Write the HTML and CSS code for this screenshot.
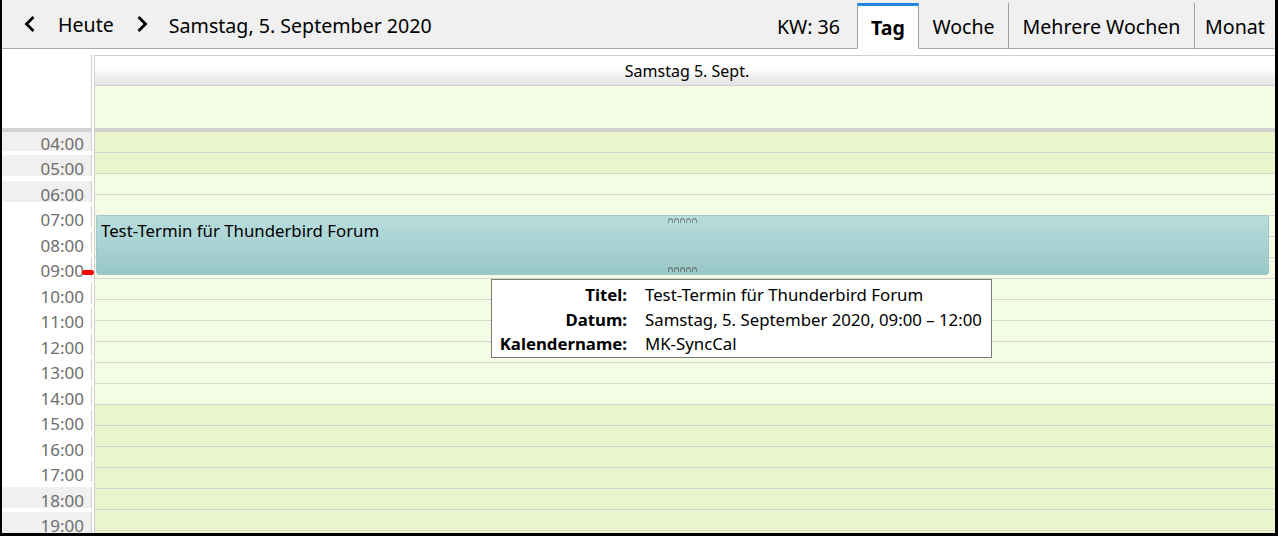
FILE: index.html
```html
<!DOCTYPE html>
<html lang="de">
<head>
<meta charset="utf-8">
<title>Kalender – Tag</title>
<link rel="stylesheet" href="styles.css">
</head>
<body>
<div class="window">
  <header class="toolbar">
    <div class="nav">
      <span class="chev prev"><svg width="14" height="18" viewBox="0 0 14 18"><path d="M10.5 2 L3.5 9 L10.5 16" fill="none" stroke="#000" stroke-width="2.8" stroke-linejoin="miter"/></svg></span>
      <span class="today">Heute</span>
      <span class="chev next"><svg width="14" height="18" viewBox="0 0 14 18"><path d="M3.5 2 L10.5 9 L3.5 16" fill="none" stroke="#000" stroke-width="2.8" stroke-linejoin="miter"/></svg></span>
      <span class="date">Samstag, 5. September 2020</span>
    </div>
    <div class="views">
      <span class="kw">KW: 36</span>
      <nav class="tabs">
        <div class="tab tab-day active">Tag</div>
        <div class="tab tab-week">Woche</div>
        <div class="tab tab-multi">Mehrere Wochen</div>
        <div class="tab tab-month">Monat</div>
      </nav>
    </div>
  </header>

  <main class="cal">
    <div class="timecol">
      <div class="corner"></div>
      <div class="sep"></div>
      <div class="labels">
        <div class="lab first off"><div class="box">04:00</div></div>
        <div class="lab off"><div class="box">05:00</div></div>
        <div class="lab off"><div class="box">06:00</div></div>
        <div class="lab"><div class="box">07:00</div></div>
        <div class="lab"><div class="box">08:00</div></div>
        <div class="lab"><div class="box">09:00</div></div>
        <div class="lab"><div class="box">10:00</div></div>
        <div class="lab"><div class="box">11:00</div></div>
        <div class="lab"><div class="box">12:00</div></div>
        <div class="lab"><div class="box">13:00</div></div>
        <div class="lab"><div class="box">14:00</div></div>
        <div class="lab"><div class="box">15:00</div></div>
        <div class="lab"><div class="box">16:00</div></div>
        <div class="lab"><div class="box">17:00</div></div>
        <div class="lab off"><div class="box">18:00</div></div>
        <div class="lab off"><div class="box">19:00</div></div>
      </div>
    </div>

    <div class="daycol">
      <div class="dayhead">Samstag 5. Sept.</div>
      <div class="allday"></div>
      <div class="sep"></div>
      <div class="rows">
        <div class="row dark"></div>
        <div class="row dark"></div>
        <div class="row"></div>
        <div class="row"></div>
        <div class="row"></div>
        <div class="row"></div>
        <div class="row"></div>
        <div class="row"></div>
        <div class="row"></div>
        <div class="row"></div>
        <div class="row"></div>
        <div class="row"></div>
        <div class="row"></div>
        <div class="row dark"></div>
        <div class="row dark"></div>
        <div class="row dark"></div>
        <div class="row dark"></div>
        <div class="row dark"></div>
        <div class="row dark"></div>
        <div class="row dark"></div>

        <div class="event">
          <svg class="grip grip-top" width="29" height="5" viewBox="0 0 29 5"><g fill="#7f8e8e"><path d="M0 5V2.5a2.5 2.5 0 0 1 5 0V5H4V3a1.5 1.5 0 0 0-3 0v2z"/><path d="M6 5V2.5a2.5 2.5 0 0 1 5 0V5H10V3a1.5 1.5 0 0 0-3 0v2z"/><path d="M12 5V2.5a2.5 2.5 0 0 1 5 0V5H16V3a1.5 1.5 0 0 0-3 0v2z"/><path d="M18 5V2.5a2.5 2.5 0 0 1 5 0V5H22V3a1.5 1.5 0 0 0-3 0v2z"/><path d="M24 5V2.5a2.5 2.5 0 0 1 5 0V5H28V3a1.5 1.5 0 0 0-3 0v2z"/></g></svg>
          <span class="ev-title">Test-Termin für Thunderbird Forum</span>
          <svg class="grip grip-bottom" width="29" height="5" viewBox="0 0 29 5"><g fill="#6f7f7f"><path d="M0 5V2.5a2.5 2.5 0 0 1 5 0V5H4V3a1.5 1.5 0 0 0-3 0v2z"/><path d="M6 5V2.5a2.5 2.5 0 0 1 5 0V5H10V3a1.5 1.5 0 0 0-3 0v2z"/><path d="M12 5V2.5a2.5 2.5 0 0 1 5 0V5H16V3a1.5 1.5 0 0 0-3 0v2z"/><path d="M18 5V2.5a2.5 2.5 0 0 1 5 0V5H22V3a1.5 1.5 0 0 0-3 0v2z"/><path d="M24 5V2.5a2.5 2.5 0 0 1 5 0V5H28V3a1.5 1.5 0 0 0-3 0v2z"/></g></svg>
        </div>

        <div class="tooltip">
          <span class="tt-label">Titel:</span><span class="tt-value">Test-Termin für Thunderbird Forum</span>
          <span class="tt-label">Datum:</span><span class="tt-value">Samstag, 5. September 2020, 09:00 – 12:00</span>
          <span class="tt-label">Kalendername:</span><span class="tt-value">MK-SyncCal</span>
        </div>
      </div>
    </div>

    <div class="now-marker"></div>
  </main>
</div>
</body>
</html>
```

FILE: styles.css
```css
* { box-sizing: border-box; }

html, body {
  margin: 0;
  padding: 0;
  background: #000;
  width: 1278px;
  height: 536px;
  overflow: hidden;
}

body {
  font-family: "Noto Sans", "Open Sans", sans-serif;
  color: #000;
}

.window {
  margin-left: 2px;
  width: 1273px;
  height: 533px;
  background: #fff;
  overflow: hidden;
  display: flex;
  flex-direction: column;
}

/* ---------- toolbar ---------- */
.toolbar {
  height: 49px;
  flex: none;
  background: #f0f0f0;
  border-bottom: 1px solid #a9a9a9;
  display: flex;
  justify-content: space-between;
}

.nav {
  display: flex;
  align-items: center;
  padding-left: 21px;
  font-size: 19.6px;
  padding-top: 2px;
}

.chev {
  display: flex;
  width: 14px;
  height: 18px;
  margin-top: -2px;
}

.today { margin-left: 21px; margin-top: -2px; }
.next { margin-left: 21px; }
.date { margin-left: 20px; }

.views {
  display: flex;
  align-items: stretch;
}

.kw {
  align-self: center;
  font-size: 19.6px;
  margin-right: 17px;
  padding-top: 4px;
}

.tabs {
  display: flex;
  align-items: stretch;
  padding-top: 3px;
}

.tab {
  font-size: 19.6px;
  display: flex;
  align-items: center;
  justify-content: center;
  border-left: 1px solid #a3a3a3;
  background: #f0f0f0;
  padding-top: 1px;
  margin-bottom: -1px;
  border-bottom: 1px solid #a9a9a9;
}

.tab.active {
  background: #fff;
  font-weight: 700;
  border-top: 3px solid #1f86e3;
  border-right: 1px solid #a3a3a3;
  border-bottom: 1px solid #fff;
  padding-top: 0;
}

.tab-day { width: 62px; }
.tab-week { width: 89px; border-left: none; }
.tab-multi { width: 186px; }
.tab-month { width: 81px; }

/* ---------- calendar ---------- */
.cal {
  position: relative;
  flex: 1;
  display: flex;
  gap: 2px;
  overflow: hidden;
}

.timecol {
  width: 90px;
  flex: none;
  display: flex;
  flex-direction: column;
}

.corner {
  flex: none;
  margin-top: 6px;
  height: 73px;
  border-right: 1px solid #cfcfcf;
}

.sep {
  height: 4px;
  background: #d2d2d2;
  flex: none;
}

.labels {
  flex: none;
  display: flex;
  flex-direction: column;
}

.lab {
  height: 25.47px;
  padding-bottom: 4.47px;
  flex: none;
}

.lab.first {
  height: 23.47px;
}

.lab .box {
  height: 100%;
  border-right: 1px solid #cfcfcf;
  display: flex;
  align-items: flex-end;
  justify-content: flex-end;
  padding-right: 7px;
  font-size: 17px;
  line-height: 15px;
  color: #6e6e6e;
  white-space: nowrap;
}

.lab.off .box { background: #f0f0f0; }

.daycol {
  flex: 1;
  margin-top: 6px;
  border-left: 1px solid #cfcfcf;
  display: flex;
  flex-direction: column;
}

.dayhead {
  flex: none;
  height: 31px;
  border-top: 1px solid #cfcfcf;
  border-bottom: 1px solid #cfcfcf;
  background: linear-gradient(to bottom, #ffffff 0%, #ffffff 40%, #e3e3e3 100%);
  font-size: 16px;
  display: flex;
  align-items: center;
  justify-content: center;
  padding-left: 4px;
  padding-top: 1px;
}

.allday {
  flex: none;
  height: 42px;
  background: #f4fde3;
}

.rows {
  flex: none;
  position: relative;
  display: flex;
  flex-direction: column;
}

.row {
  height: 21px;
  flex: none;
  background: #f4fde3;
  border-bottom: 1px solid #d4d6d0;
}

.row.dark { background: #eaf5cc; }

.event {
  position: absolute;
  left: 1px;
  top: 83px;
  width: 1173px;
  height: 60px;
  border: 1px solid #9fc9c9;
  border-radius: 3px;
  background: linear-gradient(to bottom, #b9dddd, #99c7c7);
  padding: 3px 4px;
}

.ev-title {
  display: block;
  font-size: 16.8px;
  line-height: 22px;
  margin-top: 1px;
}

.grip {
  position: absolute;
  left: 571px;
  display: block;
}

.grip-top { top: 2px; }
.grip-bottom { bottom: 2px; }

.tooltip {
  position: absolute;
  left: 396px;
  top: 147px;
  width: 501px;
  height: 79px;
  background: #fff;
  border: 1px solid #7a7a7a;
  padding: 3px 6px 0 7px;
  display: grid;
  grid-template-columns: 128px 1fr;
  column-gap: 18px;
  font-size: 16.8px;
  line-height: 24px;
  white-space: nowrap;
}

.tt-label {
  font-weight: 700;
  text-align: right;
}

.now-marker {
  position: absolute;
  left: 80px;
  top: 221px;
  width: 12px;
  height: 5px;
  background: #f00;
  border-radius: 3px;
}
```
